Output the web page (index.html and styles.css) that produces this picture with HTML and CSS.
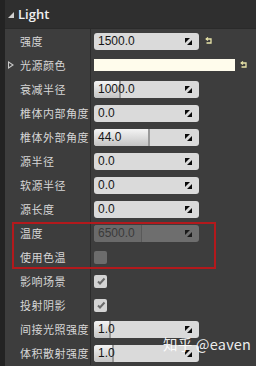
FILE: index.html
```html
<!DOCTYPE html>
<html lang="zh">
<head>
    <meta charset="UTF-8">
    <title>Light</title>
    <link rel="stylesheet" href="styles.css">
</head>
<body>
    <div class="panel">
        <div class="strip"></div>
        <div class="details">
            <!-- 分类标题 -->
            <div class="category">
                <span class="arrow-down"></span>
                <span class="category-name">Light</span>
            </div>

            <div class="row">
                <div class="label">强度</div>
                <div class="value">
                    <div class="num"><span class="fill" style="width: 0px"></span><span class="num-text">1500.0</span><svg class="spin" viewBox="0 0 7 7"><polygon points="0,0 5,0 0,5"/><polygon points="7,2 7,7 2,7"/></svg></div>
                    <svg class="reset" viewBox="0 0 8 8"><path d="M1.5 2 H6 V6 H1.5"/><path d="M3 0.5 L1.2 2 L3 3.5"/></svg>
                </div>
            </div>

            <div class="row">
                <div class="label"><span class="arrow-right"></span>光源颜色</div>
                <div class="value">
                    <div class="swatch"></div>
                    <svg class="reset" viewBox="0 0 8 8"><path d="M1.5 2 H6 V6 H1.5"/><path d="M3 0.5 L1.2 2 L3 3.5"/></svg>
                </div>
            </div>

            <div class="row">
                <div class="label">衰减半径</div>
                <div class="value">
                    <div class="num"><span class="fill" style="width: 27px"></span><span class="num-text">1000.0</span><svg class="spin" viewBox="0 0 7 7"><polygon points="0,0 5,0 0,5"/><polygon points="7,2 7,7 2,7"/></svg></div>
                </div>
            </div>

            <div class="row">
                <div class="label">椎体内部角度</div>
                <div class="value">
                    <div class="num"><span class="fill" style="width: 0px"></span><span class="num-text">0.0</span><svg class="spin" viewBox="0 0 7 7"><polygon points="0,0 5,0 0,5"/><polygon points="7,2 7,7 2,7"/></svg></div>
                </div>
            </div>

            <div class="row">
                <div class="label">椎体外部角度</div>
                <div class="value">
                    <div class="num"><span class="fill" style="width: 56px"></span><span class="num-text">44.0</span><svg class="spin" viewBox="0 0 7 7"><polygon points="0,0 5,0 0,5"/><polygon points="7,2 7,7 2,7"/></svg></div>
                </div>
            </div>

            <div class="row">
                <div class="label">源半径</div>
                <div class="value">
                    <div class="num"><span class="fill" style="width: 0px"></span><span class="num-text">0.0</span><svg class="spin" viewBox="0 0 7 7"><polygon points="0,0 5,0 0,5"/><polygon points="7,2 7,7 2,7"/></svg></div>
                </div>
            </div>

            <div class="row">
                <div class="label">软源半径</div>
                <div class="value">
                    <div class="num"><span class="fill" style="width: 0px"></span><span class="num-text">0.0</span><svg class="spin" viewBox="0 0 7 7"><polygon points="0,0 5,0 0,5"/><polygon points="7,2 7,7 2,7"/></svg></div>
                </div>
            </div>

            <div class="row">
                <div class="label">源长度</div>
                <div class="value">
                    <div class="num"><span class="fill" style="width: 0px"></span><span class="num-text">0.0</span><svg class="spin" viewBox="0 0 7 7"><polygon points="0,0 5,0 0,5"/><polygon points="7,2 7,7 2,7"/></svg></div>
                </div>
            </div>

            <div class="row">
                <div class="label">温度</div>
                <div class="value">
                    <div class="num disabled"><span class="fill" style="width: 48px"></span><span class="num-text">6500.0</span><svg class="spin" viewBox="0 0 7 7"><polygon points="0,0 5,0 0,5"/><polygon points="7,2 7,7 2,7"/></svg></div>
                </div>
            </div>

            <div class="row">
                <div class="label">使用色温</div>
                <div class="value">
                    <div class="check disabled"></div>
                </div>
            </div>

            <div class="row">
                <div class="label">影响场景</div>
                <div class="value">
                    <div class="check"><svg viewBox="0 0 12 12"><path d="M3 6.5 L5 8.5 L9.5 3.5"/></svg></div>
                </div>
            </div>

            <div class="row">
                <div class="label">投射阴影</div>
                <div class="value">
                    <div class="check"><svg viewBox="0 0 12 12"><path d="M3 6.5 L5 8.5 L9.5 3.5"/></svg></div>
                </div>
            </div>

            <div class="row">
                <div class="label">间接光照强度</div>
                <div class="value">
                    <div class="num"><span class="fill" style="width: 17px"></span><span class="num-text">1.0</span><svg class="spin" viewBox="0 0 7 7"><polygon points="0,0 5,0 0,5"/><polygon points="7,2 7,7 2,7"/></svg></div>
                </div>
            </div>

            <div class="row">
                <div class="label">体积散射强度</div>
                <div class="value">
                    <div class="num"><span class="fill" style="width: 20px"></span><span class="num-text">1.0</span><svg class="spin" viewBox="0 0 7 7"><polygon points="0,0 5,0 0,5"/><polygon points="7,2 7,7 2,7"/></svg></div>
                </div>
            </div>
        </div>

        <!-- 标注框 -->
        <div class="highlight"></div>
        <div class="watermark">知乎 @eaven</div>
    </div>
</body>
</html>
```

FILE: styles.css
```css
* {
    margin: 0;
    padding: 0;
    box-sizing: border-box;
}
body {
    width: 256px;
    height: 366px;
    overflow: hidden;
    background: #3d3d3d;
    font-family: 'Noto Sans CJK SC', 'Noto Sans', sans-serif;
    color: #d8d8d8;
}
.panel {
    position: relative;
    display: flex;
    height: 366px;
}
.strip {
    width: 5px;
    flex-shrink: 0;
    background: #232323;
}
.details {
    flex: 1;
    display: flex;
    flex-direction: column;
}
.category {
    height: 29px;
    display: flex;
    align-items: center;
    padding-left: 3px;
    background: #2f2f2f;
    border-bottom: 1px solid #2a2a2a;
    color: #f0f0f0;
    font-family: 'Open Sans', 'Noto Sans', sans-serif;
    font-weight: 600;
    font-size: 13px;
}
.arrow-down {
    width: 0;
    height: 0;
    border-left: 6px solid transparent;
    border-bottom: 6px solid #d0d0d0;
    margin-right: 4px;
    margin-top: 2px;
}
.row {
    height: 24px;
    display: flex;
}
.label {
    width: 86px;
    flex-shrink: 0;
    display: flex;
    align-items: center;
    padding-left: 15px;
    font-size: 11px;
    letter-spacing: 0.5px;
    color: #d6d6d6;
    border-right: 1px solid #2b2b2b;
    position: relative;
}
.arrow-right {
    position: absolute;
    left: 3px;
    top: 8px;
    width: 6px;
    height: 8px;
}
.arrow-right::before {
    content: '';
    position: absolute;
    left: 0;
    top: 0;
    border-top: 4px solid transparent;
    border-bottom: 4px solid transparent;
    border-left: 6px solid #c8c8c8;
}
.arrow-right::after {
    content: '';
    position: absolute;
    left: 1px;
    top: 2px;
    border-top: 2px solid transparent;
    border-bottom: 2px solid transparent;
    border-left: 3px solid #3d3d3d;
}
.value {
    flex: 1;
    display: flex;
    align-items: center;
    padding-left: 3px;
    gap: 6px;
}
.num {
    position: relative;
    width: 105px;
    height: 17px;
    border-radius: 3px;
    background: #dadada;
    display: flex;
    align-items: center;
    overflow: hidden;
}
.fill {
    position: absolute;
    left: 0;
    top: 0;
    bottom: 0;
    background: linear-gradient(#f4f4f4, #c4c4c4);
    border-right: 2px solid #9a9a9a;
}
.fill[style="width: 0px"] {
    display: none;
}
.num-text {
    position: relative;
    padding-left: 4px;
    font-family: 'Liberation Sans', sans-serif;
    font-size: 12px;
    color: #151515;
    flex: 1;
}
.spin {
    position: relative;
    width: 7px;
    height: 7px;
    margin-right: 7px;
    fill: #0a0a0a;
}
.num.disabled {
    background: #6e6e6e;
}
.num.disabled .fill {
    background: #6a6a6a;
    border-right: 1px solid #595959;
}
.num.disabled .num-text {
    color: #3a3a3a;
}
.num.disabled .spin {
    fill: #1a1a1a;
}
.reset {
    width: 8px;
    height: 8px;
    fill: none;
    stroke: #e8e4a8;
    stroke-width: 1.3;
}
.swatch {
    width: 141px;
    height: 12px;
    background: #fffcec;
}
.value .swatch + .reset {
    margin-left: -1px;
}
.check {
    width: 13px;
    height: 13px;
    border-radius: 2px;
    background: #d4d4d4;
    display: flex;
    align-items: center;
    justify-content: center;
}
.check svg {
    width: 12px;
    height: 12px;
    fill: none;
    stroke: #6a6a6a;
    stroke-width: 2;
}
.check.disabled {
    background: #6c6c6c;
}
.highlight {
    position: absolute;
    left: 12px;
    top: 222px;
    width: 204px;
    height: 47px;
    border: 2px solid #b3191c;
}
.watermark {
    position: absolute;
    left: 163px;
    top: 333px;
    font-size: 14.5px;
    color: rgba(255, 255, 255, 0.92);
    font-family: 'Noto Sans CJK SC', 'Noto Sans', sans-serif;
    letter-spacing: 0.2px;
}
```
